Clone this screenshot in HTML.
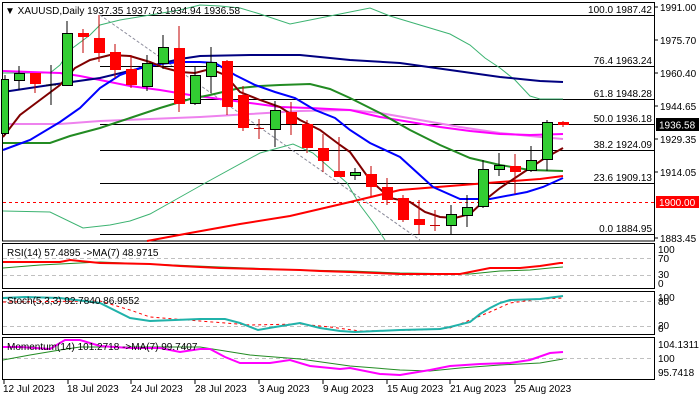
<!DOCTYPE html>
<html><head><meta charset="utf-8"><style>
html,body{margin:0;padding:0;background:#fff;width:700px;height:400px;overflow:hidden}
svg{display:block}
text{font-family:"Liberation Sans",sans-serif;font-size:10px;fill:#000}
</style></head><body>
<svg width="700" height="400" viewBox="0 0 700 400" xmlns="http://www.w3.org/2000/svg">
<rect width="700" height="400" fill="#fff"/>
<!-- frames -->
<g fill="none" stroke="#000" stroke-width="1">
<rect x="2.5" y="2.5" width="652" height="238.5"/>
<rect x="2.5" y="243.5" width="652" height="45"/>
<rect x="2.5" y="291.5" width="652" height="43"/>
<rect x="2.5" y="337.5" width="652" height="42"/>
</g>
<!-- fib lines -->
<g stroke="#000" stroke-width="1">
<line x1="100" y1="15.5" x2="654" y2="15.5"/>
<line x1="100" y1="66.5" x2="654" y2="66.5"/>
<line x1="100" y1="99.5" x2="654" y2="99.5"/>
<line x1="100" y1="124.5" x2="654" y2="124.5"/>
<line x1="100" y1="150.5" x2="654" y2="150.5"/>
<line x1="100" y1="183.5" x2="654" y2="183.5"/>
<line x1="100" y1="234.5" x2="654" y2="234.5"/>
</g>
<g text-anchor="end">
<text x="652" y="13">100.0 1987.42</text>
<text x="652" y="64">76.4 1963.24</text>
<text x="652" y="97">61.8 1948.28</text>
<text x="652" y="122">50.0 1936.18</text>
<text x="652" y="148">38.2 1924.09</text>
<text x="652" y="181">23.6 1909.13</text>
<text x="652" y="232">0.0 1884.95</text>
</g>
<line x1="3" y1="202.5" x2="654" y2="202.5" stroke="#f00" stroke-dasharray="3,3"/>
<line x1="100" y1="15" x2="420" y2="240" stroke="#8a8a9a" stroke-dasharray="3,2"/>
<!-- bands -->
<g fill="none" stroke="#3cb371" stroke-width="1">
<polyline points="3,73 50,73 60,65 70,50 90,35 100,25 120,20 150,15 180,10 200,5 220,6 240,8 260,14 290,24 310,20 350,12 370,8 390,16 420,25 450,34 470,45 485,58 500,68 515,80 530,96 540,99 563,99"/>
<polyline points="3,211 50,212 83,228 110,225 130,221 150,214 175,200 207,182 260,153 293,144 313,153 347,183 360,205 375,225 385,240"/>
</g>
<g fill="none" stroke-width="2">
<polyline stroke="#ff0000" points="147,241 190,233 240,224 290,216 350,202 400,190 450,186 500,182 540,179 563,176"/>
<polyline stroke="#ee82ee" points="3,124 60,124 100,121 150,119 200,117 250,114 300,111 350,110 380,113 420,120 460,127 500,133 530,136 563,139"/>
<polyline stroke="#ff00ff" points="3,71 30,72 60,73 80,76 100,80 130,86 160,90 190,95 220,99 250,103 280,107 310,108 350,110 380,117 410,122 440,127 470,131 500,134 530,135 563,134"/>
<polyline stroke="#228b22" points="3,143 50,143 70,136 100,128 130,118 160,108 190,99 210,95 240,88 260,86 280,85 310,84 330,89 350,98 380,113 410,130 440,145 470,158 500,165 530,170 563,171"/>
<polyline stroke="#000080" points="3,92 50,85 100,78 150,66 180,59 200,56 250,55 300,55 350,60 400,63 450,70 500,77 540,81 563,82"/>
<polyline stroke="#0000ff" points="3,150 30,140 60,122 80,108 100,88 120,75 140,68 160,64 180,62 200,62 215,63 235,75 255,85 275,92 295,98 315,110 335,118 350,130 370,143 400,157 433,187 460,199 490,199 527,192 543,187 563,178"/>
<polyline stroke="#800000" points="3,137 20,115 40,100 60,85 75,68 90,60 110,55 130,56 150,62 165,68 180,72 195,73 210,69 225,75 240,92 260,100 280,107 300,120 320,130 340,145 350,152 370,180 390,198 410,202 425,212 440,217 455,218 470,214 485,200 500,188 515,178 530,168 545,158 563,148"/>
</g>
<!-- candles -->
<g stroke-width="1">
<g stroke="#000" fill="#32cd32">
<line x1="5" y1="75" x2="5" y2="135"/><rect x="1.5" y="79.5" width="7" height="54"/>
<line x1="19" y1="66" x2="19" y2="90"/><rect x="14.5" y="73.5" width="10" height="7"/>
<line x1="51" y1="65" x2="51" y2="105"/><line x1="46" y1="85" x2="56" y2="85"/>
<line x1="67" y1="21" x2="67" y2="85"/><rect x="62.5" y="33.5" width="10" height="52"/>
<line x1="147" y1="55" x2="147" y2="91"/><rect x="142.5" y="63.5" width="10" height="23"/>
<line x1="163" y1="35" x2="163" y2="69"/><rect x="158.5" y="47.5" width="10" height="16"/>
<line x1="195" y1="66" x2="195" y2="105"/><rect x="190.5" y="75.5" width="10" height="28"/>
<line x1="211" y1="47" x2="211" y2="93"/><rect x="206.5" y="62.5" width="10" height="14"/>
<line x1="275" y1="101" x2="275" y2="147"/><rect x="270.5" y="110.5" width="10" height="19"/>
<line x1="355" y1="168" x2="355" y2="180"/><rect x="350.5" y="172.5" width="10" height="3"/>
<line x1="451" y1="205" x2="451" y2="235"/><rect x="446.5" y="214.5" width="10" height="11"/>
<line x1="467" y1="195" x2="467" y2="227"/><rect x="462.5" y="207.5" width="10" height="8"/>
<line x1="483" y1="160" x2="483" y2="208"/><rect x="478.5" y="169.5" width="10" height="37"/>
<line x1="499" y1="153" x2="499" y2="176"/><rect x="494.5" y="165.5" width="10" height="4"/>
<line x1="531" y1="146" x2="531" y2="172"/><rect x="526.5" y="160.5" width="10" height="10"/>
<line x1="547" y1="120" x2="547" y2="171"/><rect x="542.5" y="122.5" width="10" height="37"/>
</g>
<g stroke="#c00000" fill="#ff0000">
<line x1="35" y1="73" x2="35" y2="93"/><rect x="30" y="73" width="11" height="11" stroke="none"/>
<line x1="83" y1="29" x2="83" y2="53"/><rect x="78" y="33" width="11" height="4" stroke="none"/>
<line x1="99" y1="15" x2="99" y2="62"/><rect x="94" y="38" width="11" height="15" stroke="none"/>
<line x1="115" y1="44" x2="115" y2="78"/><rect x="110" y="52" width="11" height="18" stroke="none"/>
<line x1="131" y1="55" x2="131" y2="88"/><rect x="126" y="69" width="11" height="16" stroke="none"/>
<line x1="179" y1="26" x2="179" y2="112"/><rect x="174" y="48" width="11" height="56" stroke="none"/>
<line x1="227" y1="60" x2="227" y2="115"/><rect x="222" y="61" width="11" height="46" stroke="none"/>
<line x1="243" y1="86" x2="243" y2="131"/><rect x="238" y="95" width="11" height="33" stroke="none"/>
<line x1="259" y1="119" x2="259" y2="139"/><line x1="254" y1="128.5" x2="264" y2="128.5"/>
<line x1="291" y1="102" x2="291" y2="135"/><rect x="286" y="112" width="11" height="12" stroke="none"/>
<line x1="307" y1="120" x2="307" y2="153"/><rect x="302" y="124" width="11" height="24" stroke="none"/>
<line x1="323" y1="134" x2="323" y2="172"/><rect x="318" y="148" width="11" height="13" stroke="none"/>
<line x1="339" y1="137" x2="339" y2="177"/><rect x="334" y="171" width="11" height="6" stroke="none"/>
<line x1="371" y1="166" x2="371" y2="196"/><rect x="366" y="174" width="11" height="13" stroke="none"/>
<line x1="387" y1="178" x2="387" y2="205"/><rect x="382" y="187" width="11" height="13" stroke="none"/>
<line x1="403" y1="195" x2="403" y2="222"/><rect x="398" y="198" width="11" height="22" stroke="none"/>
<line x1="419" y1="200" x2="419" y2="234"/><rect x="414" y="219" width="11" height="6" stroke="none"/>
<line x1="435" y1="210" x2="435" y2="231"/><line x1="430" y1="225.5" x2="440" y2="225.5"/>
<line x1="515" y1="154" x2="515" y2="194"/><rect x="510" y="166" width="11" height="6" stroke="none"/>
<line x1="563" y1="121" x2="563" y2="127"/><rect x="558" y="122" width="11" height="3" stroke="none"/>
</g>
</g>
<text x="5" y="14" font-size="10">▼ XAUUSD,Daily  1937.35 1937.73 1934.94 1936.58</text>
<!-- right axis -->
<g>
<text x="660" y="11">1991.00</text>
<text x="660" y="44">1975.70</text>
<text x="660" y="77">1960.40</text>
<text x="660" y="110">1944.65</text>
<text x="660" y="143">1929.35</text>
<text x="660" y="176">1914.05</text>
<text x="660" y="242">1883.45</text>
</g>
<g stroke="#000"><line x1="654" y1="7" x2="658" y2="7"/><line x1="654" y1="40" x2="658" y2="40"/><line x1="654" y1="73" x2="658" y2="73"/><line x1="654" y1="106" x2="658" y2="106"/><line x1="654" y1="139" x2="658" y2="139"/><line x1="654" y1="172" x2="658" y2="172"/><line x1="654" y1="238" x2="658" y2="238"/></g>
<rect x="656" y="118" width="43" height="13" fill="#000"/>
<text x="659" y="128.5" fill="#fff" style="fill:#fff">1936.58</text>
<rect x="656" y="196" width="43" height="12" fill="#ff0000"/>
<text x="659" y="206" style="fill:#fff">1900.00</text>
<!-- RSI -->
<g stroke="#c0c0c0" stroke-dasharray="4,3"><line x1="3" y1="258.5" x2="654" y2="258.5"/><line x1="3" y1="275.5" x2="654" y2="275.5"/>
<line x1="3" y1="301.5" x2="654" y2="301.5"/><line x1="3" y1="326.5" x2="654" y2="326.5"/><line x1="3" y1="358.5" x2="654" y2="358.5"/></g>
<polyline fill="none" stroke="#228b22" stroke-width="1" points="3,268 40,265 100,262 150,264 220,267 300,270 350,271 400,273 470,274 500,271 530,270 550,268 563,267"/>
<polyline fill="none" stroke="#ff0000" stroke-width="2" points="3,262 60,262 70,260 100,263 150,264 180,266 220,268 260,269 300,270 320,271 350,272 400,274 460,274 470,272 490,268 520,268 540,266 560,263 563,263"/>
<text x="7" y="256">RSI(14) 57.4895  -&gt;MA(7) 48.9715</text>
<text x="658" y="253">100</text><text x="658" y="262">70</text><text x="658" y="278">30</text><text x="658" y="287">0</text>
<!-- Stoch -->
<polyline fill="none" stroke="#ff0000" stroke-width="1" stroke-dasharray="3,3" points="3,302 100,301 130,310 150,317 200,321 250,325 300,324 330,327 360,331 420,330 450,328 470,320 490,312 510,303 540,299 563,298"/>
<polyline fill="none" stroke="#20b2aa" stroke-width="2" points="3,298 25,297 60,298 100,303 130,318 150,321 200,319 225,319 240,323 258,330 275,327 300,323 320,328 340,331 355,332 400,330 440,329 450,327 470,322 480,314 490,308 500,303 510,300 540,299 563,296"/>
<text x="7" y="304">Stoch(5,3,3) 92.7840 86.9552</text>
<text x="658" y="301">100</text><text x="658" y="305">80</text><text x="658" y="329">20</text><text x="658" y="332">0</text>
<!-- Momentum -->
<polyline fill="none" stroke="#228b22" stroke-width="1" points="3,360 30,355 60,350 80,347 200,347 250,355 300,359 350,366 400,370 430,371 460,368 500,365 540,363 563,359"/>
<polyline fill="none" stroke="#ff00ff" stroke-width="2" points="3,347 20,347 50,349 65,340 80,340 100,346 130,348 160,348 180,352 200,349 210,349 225,357 240,363 270,363 290,360 310,366 340,369 350,368 380,374 400,375 430,370 450,366 480,364 510,363 530,360 550,353 563,352"/>
<text x="7" y="350">Momentum(14) 101.2718  -&gt;MA(7) 99.7407</text>
<text x="658" y="348">104.1311</text><text x="658" y="362">100</text><text x="658" y="376">95.7418</text>
<!-- dates -->
<g stroke="#000"><line x1="4" y1="380" x2="4" y2="384"/><line x1="68" y1="380" x2="68" y2="384"/><line x1="131" y1="380" x2="131" y2="384"/><line x1="195" y1="380" x2="195" y2="384"/><line x1="259" y1="380" x2="259" y2="384"/><line x1="323" y1="380" x2="323" y2="384"/><line x1="387" y1="380" x2="387" y2="384"/><line x1="450" y1="380" x2="450" y2="384"/><line x1="515" y1="380" x2="515" y2="384"/></g>
<g font-size="9.5">
<text x="3" y="392" font-size="9.5">12 Jul 2023</text>
<text x="67" y="392" font-size="9.5">18 Jul 2023</text>
<text x="131" y="392" font-size="9.5">24 Jul 2023</text>
<text x="195" y="392" font-size="9.5">28 Jul 2023</text>
<text x="259" y="392" font-size="9.5">3 Aug 2023</text>
<text x="323" y="392" font-size="9.5">9 Aug 2023</text>
<text x="387" y="392" font-size="9.5">15 Aug 2023</text>
<text x="450" y="392" font-size="9.5">21 Aug 2023</text>
<text x="515" y="392" font-size="9.5">25 Aug 2023</text>
</g>
</svg>
</body></html>
